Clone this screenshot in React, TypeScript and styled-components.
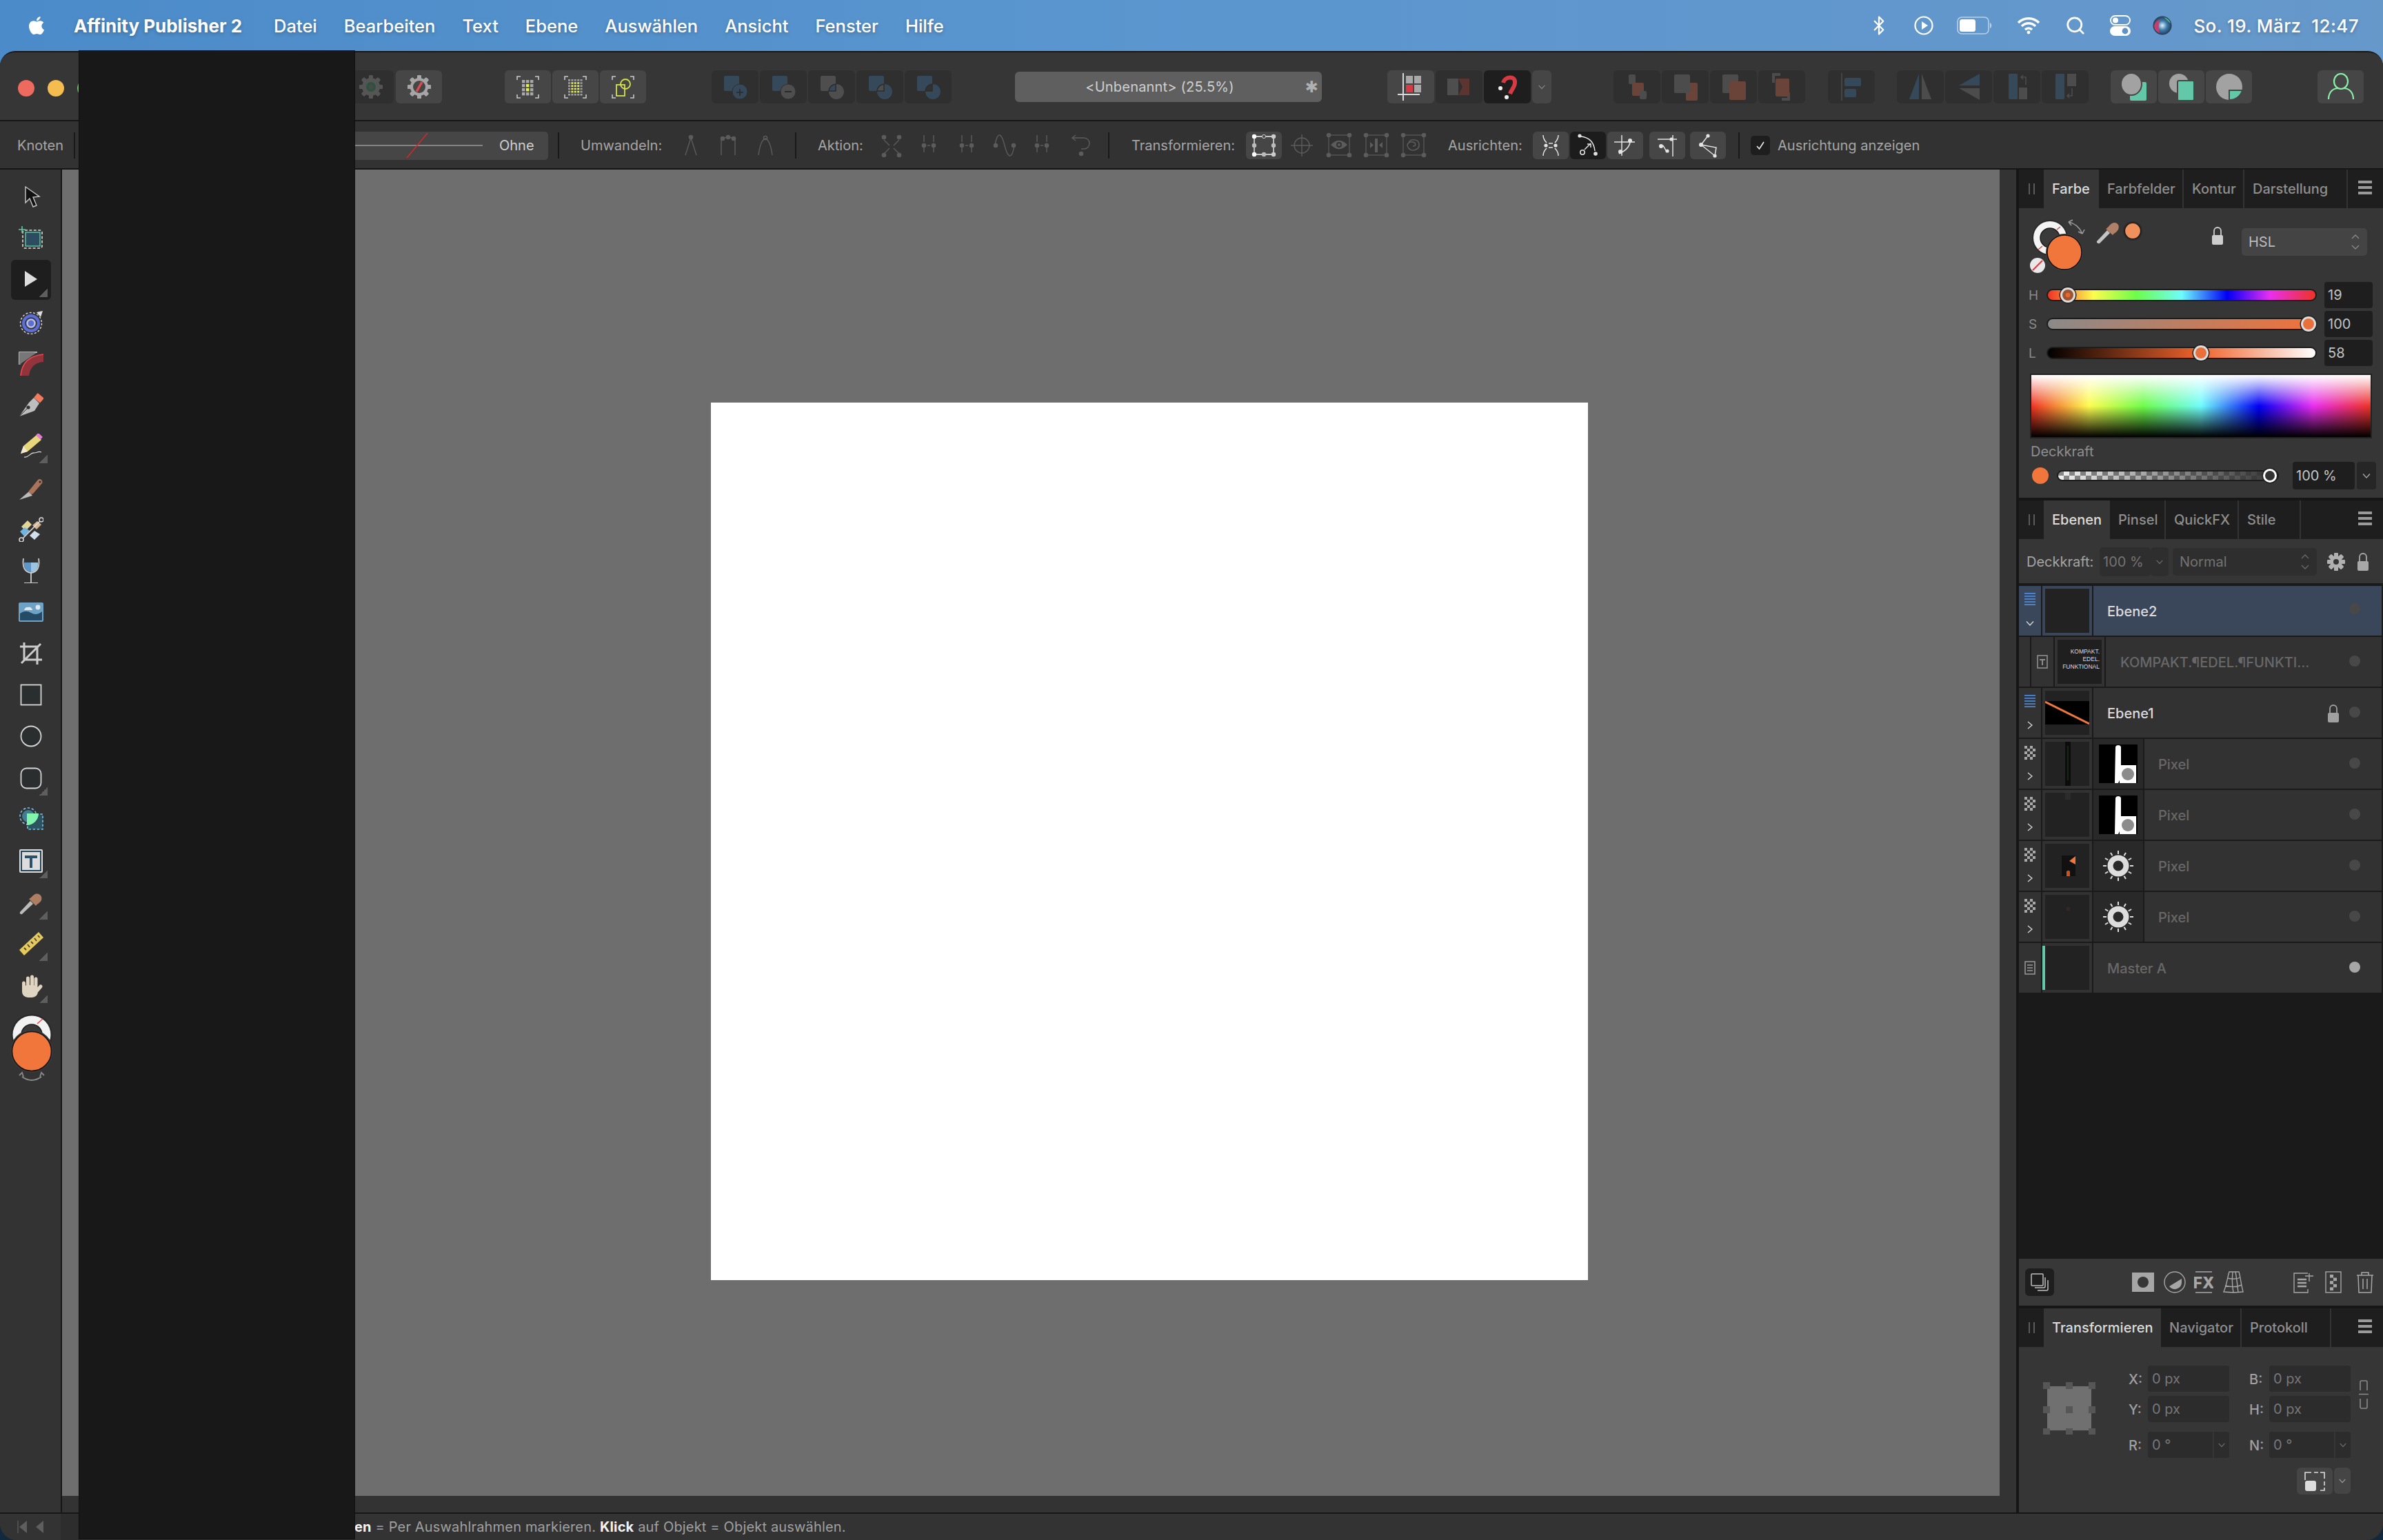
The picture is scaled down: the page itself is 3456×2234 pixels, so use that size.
import React from "react";
import styled, { createGlobalStyle } from "styled-components";
import { FaApple } from "react-icons/fa";
import { LuBluetooth, LuSearch } from "react-icons/lu";

const FONT = `Inter, "Noto Sans", "Liberation Sans", sans-serif`;
const TEAL = "#62c8a8";
const ORANGE = "#f0763c";
const DIM = "#5c5c5c";

const Global = createGlobalStyle`
	html, body { margin: 0; padding: 0; background: #10293c; }
	* { box-sizing: border-box; }
	svg { display: block; flex: none; }
`;

const Desktop = styled.div`
	position: relative;
	width: 3456px;
	height: 2234px;
	display: flex;
	flex-direction: column;
	overflow: hidden;
	font-family: ${FONT};
	background: linear-gradient(90deg, #4b8bc9, #6699cb) top / 100% 120px no-repeat, #10293c;
`;

const MenuBar = styled.div`
	height: 74px;
	flex: none;
	display: flex;
	align-items: center;
	padding: 0 35px 0 38px;
	color: #fff;
	font-size: 25.5px;
	font-weight: 500;
	text-shadow: 0 2px 5px rgba(0, 0, 0, 0.25);
	background: linear-gradient(90deg, #4b8bc9, #5b96cf 50%, #6698ca);
`;

const AppName = styled.span`
	margin: 0 46px 0 39px;
	font-size: 26px;
	font-weight: 700;
`;

const MenuItem = styled.span`
	margin-right: 39px;
`;

const StatusIcons = styled.div`
	margin-left: auto;
	display: flex;
	align-items: center;
`;

const StatusSlot = styled.div<{ $w: number; $ml: number }>`
	width: ${(p) => p.$w}px;
	margin-left: ${(p) => p.$ml}px;
	display: flex;
	justify-content: center;
`;

const Clock = styled.span`
	margin-left: 31px;
	font-size: 26px;
	white-space: pre;
	letter-spacing: 0.42px;
`;

const Redaction = styled.div`
	position: absolute;
	left: 115px;
	top: 74px;
	width: 399px;
	height: 2158px;
	background: #181818;
	box-shadow: 0 0 0 1px #101010;
`;

const Window = styled.div`
	flex: 1;
	display: flex;
	flex-direction: column;
	min-height: 0;
	background: #333;
	border-top: 2px solid #161616;
	border-radius: 22px 22px 24px 24px;
	overflow: hidden;
`;

const Toolbar = styled.div`
	height: 100px;
	flex: none;
	display: flex;
	align-items: center;
	padding: 2px 0 0 26px;
	background: #363636;
	border-bottom: 2px solid #161616;
`;

const ContextBar = styled.div`
	height: 70px;
	flex: none;
	display: flex;
	align-items: center;
	padding: 2px 0 0 25px;
	background: #323232;
	border-bottom: 2px solid #161616;
	color: #a6a6a6;
	font-size: 20px;
`;

const Lights = styled.div`
	display: flex;
	gap: 19px;
	margin-top: 4px;
`;

const Light = styled.span<{ $c: string }>`
	width: 24px;
	height: 24px;
	border-radius: 50%;
	background: ${(p) => p.$c};
`;

const Group = styled.div<{ $ml: number; $gap?: number }>`
	margin-left: ${(p) => p.$ml}px;
	display: flex;
	gap: ${(p) => p.$gap ?? 2}px;
`;

const ToolBtn = styled.div<{ $w?: number; $tone?: "dim" | "on" | "sel" }>`
	width: ${(p) => p.$w ?? 68}px;
	height: 48px;
	display: flex;
	align-items: center;
	justify-content: center;
	color: #bbb;
	font-size: 16px;
	border-radius: 6px;
	background: ${(p) => (p.$tone === "sel" ? "#1e1e1e" : p.$tone === "on" ? "#464646" : "#2f2f2f")};
`;

const TitleField = styled.div`
	position: relative;
	margin-left: 92px;
	width: 445px;
	height: 44px;
	padding-right: 25px;
	display: flex;
	align-items: center;
	justify-content: center;
	border-radius: 6px;
	background: #5f5f5f;
	color: #cfcfcf;
	font-size: 20px;
	letter-spacing: 0.2px;
`;

const TitleStar = styled.span`
	position: absolute;
	right: 5px;
	top: 8px;
	font: 23px / 28px "DejaVu Sans", sans-serif;
	color: #b0b0b0;
`;

const Sep = styled.span<{ $ml: number }>`
	width: 2px;
	height: 38px;
	flex: none;
	margin-left: ${(p) => p.$ml}px;
	background: #191919;
`;

const BarLabel = styled.span<{ $ml?: number; $w?: number }>`
	margin-left: ${(p) => p.$ml ?? 0}px;
	${(p) => (p.$w ? `width: ${p.$w}px;` : "")}
	flex: none;
	white-space: nowrap;
`;

const LineField = styled.div`
	margin-left: 405px;
	width: 281px;
	height: 41px;
	display: flex;
	align-items: center;
	border-radius: 0 5px 5px 0;
	background: #464646;
	color: #d0d0d0;
`;

const LineText = styled.span`
	margin-left: 24px;
`;

const IconSlot = styled.div<{ $w?: number; $ml?: number }>`
	width: ${(p) => p.$w ?? 54}px;
	margin-left: ${(p) => p.$ml ?? 0}px;
	flex: none;
	display: flex;
	justify-content: center;
`;

const SmallBtn = styled.div<{ $ml?: number; $tone?: "on" | "sel" }>`
	width: 52px;
	height: 40px;
	flex: none;
	margin-left: ${(p) => p.$ml ?? 0}px;
	display: flex;
	align-items: center;
	justify-content: center;
	border-radius: 6px;
	background: ${(p) => (p.$tone === "sel" ? "#1c1c1c" : "#464646")};
`;

const Check = styled.div`
	width: 28px;
	height: 28px;
	flex: none;
	margin-left: 16px;
	display: flex;
	align-items: center;
	justify-content: center;
	border-radius: 5px;
	background: #1e1e1e;
`;

const Main = styled.div`
	flex: 1;
	min-height: 0;
	display: flex;
`;

const ToolColumn = styled.div`
	width: 90px;
	flex: none;
	padding: 11px 0 0 16px;
	display: flex;
	flex-direction: column;
	gap: 2.2px;
	border-right: 2px solid #161616;
	background: #333;
`;

const Tool = styled.div<{ $sel?: boolean }>`
	position: relative;
	width: 58px;
	height: 58px;
	display: flex;
	align-items: center;
	justify-content: center;
	border-radius: 6px;
	background: ${(p) => (p.$sel ? "#1e1e1e" : "transparent")};
`;

const Corner = styled.span`
	position: absolute;
	right: 5px;
	bottom: 4px;
	width: 12px;
	height: 12px;
	background: linear-gradient(135deg, transparent 50%, #5e5e5e 50%);
`;

const ColourWell = styled.div`
	margin: 8px 0 0 -2px;
`;

const CanvasColumn = styled.div`
	flex: 1;
	min-width: 0;
	display: flex;
	flex-direction: column;
`;

const CanvasRow = styled.div`
	flex: 1;
	min-height: 0;
	padding-right: 24px;
	display: flex;
`;

const Canvas = styled.div`
	flex: 1;
	background: #6e6e6e;
	padding: 338px 0 0 941px;
`;

const Page = styled.div`
	width: 1272px;
	height: 1273px;
	background: #fff;
`;

const HScrollStrip = styled.div`
	height: 24px;
	flex: none;
`;

const RightColumn = styled.div`
	width: 532px;
	flex: none;
	display: flex;
	flex-direction: column;
	gap: 4px;
	border-left: 4px solid #161616;
	background: #161616;
`;

const Panel = styled.section<{ $grow?: boolean; $h?: number }>`
	${(p) => (p.$grow ? "flex: 1; min-height: 0;" : `height: ${p.$h}px; flex: none;`)}
	display: flex;
	flex-direction: column;
	background: #363636;
`;

const TabBar = styled.div`
	height: 56px;
	flex: none;
	display: flex;
	align-items: stretch;
	background: #1e1e1e;
	font-size: 20px;
	font-weight: 500;
`;

const Grip = styled.div`
	width: 36px;
	display: flex;
	align-items: center;
	justify-content: center;
	gap: 5px;
	& > i {
		width: 2px;
		height: 16px;
		background: #5a5a5a;
	}
`;

const Tab = styled.div<{ $w: number; $active?: boolean }>`
	width: ${(p) => p.$w}px;
	padding-left: 12px;
	display: flex;
	align-items: center;
	white-space: nowrap;
	color: ${(p) => (p.$active ? "#dcdcdc" : "#8e8e8e")};
	background: ${(p) => (p.$active ? "#363636" : "transparent")};
	${(p) => (p.$active ? "" : "border-right: 2px solid #333;")}
	&:last-of-type {
		border-right: none;
	}
`;

const Burger = styled.div`
	margin: 16px 16px 0 auto;
	width: 20px;
	height: 20px;
	background: repeating-linear-gradient(#9a9a9a 0 4px, transparent 4px 8px);
`;

const ColourBody = styled.div`
	flex: 1;
	padding-top: 16px;
	color: #9a9a9a;
	font-size: 20px;
`;

const SwatchRow = styled.div`
	height: 91px;
	display: flex;
	padding-left: 12px;
`;

const LockWrap = styled.div`
	margin: 11px 0 0 97px;
`;

const Select = styled.div<{ $w: number; $ml: number; $h?: number; $tone?: string }>`
	width: ${(p) => p.$w}px;
	height: ${(p) => p.$h ?? 40}px;
	margin-left: ${(p) => p.$ml}px;
	padding: 0 10px;
	display: flex;
	align-items: center;
	justify-content: space-between;
	border-radius: 5px;
	background: ${(p) => p.$tone ?? "#444"};
`;

const HslSelect = styled(Select)`
	margin-top: 13px;
	color: #bcbcbc;
`;

const SliderStack = styled.div`
	display: flex;
	flex-direction: column;
	gap: 4px;
`;

const SliderRow = styled.div`
	height: 38px;
	padding-left: 14px;
	display: flex;
	align-items: center;
`;

const SliderLabel = styled.span`
	width: 26px;
	font-size: 19px;
	color: #8a8a8a;
`;

const Track = styled.div<{ $bg: string; $w: number; $h?: number }>`
	position: relative;
	width: ${(p) => p.$w}px;
	height: ${(p) => p.$h ?? 18}px;
	border: 2px solid #1d1d1d;
	border-radius: 10px;
	background: ${(p) => p.$bg};
`;

const Thumb = styled.span<{ $pos: number; $fill: string }>`
	position: absolute;
	left: ${(p) => p.$pos}%;
	top: 50%;
	width: 22px;
	height: 22px;
	transform: translate(-50%, -50%);
	border-radius: 50%;
	border: 3px solid #ddd;
	box-shadow: 0 0 0 1.5px #222;
	background: ${(p) => p.$fill};
`;

const WhiteThumb = styled(Thumb)`
	width: 20px;
	height: 20px;
	border: 3.5px solid #fff;
`;

const ValueBox = styled.div<{ $w?: number; $ml?: number }>`
	width: ${(p) => p.$w ?? 70}px;
	height: ${(p) => (p.$w ? 40 : 38)}px;
	flex: none;
	margin-left: ${(p) => p.$ml ?? 11}px;
	padding-left: 5px;
	display: flex;
	align-items: center;
	border-radius: 4px;
	background: #1e1e1e;
	color: #c4c4c4;
`;

const ChevBox = styled.div`
	width: 28px;
	height: 40px;
	margin-left: 3px;
	display: flex;
	align-items: center;
	justify-content: center;
	border-radius: 4px;
	background: #262626;
`;

const Spectrum = styled.div`
	width: 496px;
	height: 94px;
	margin: 11px 0 0 16px;
	border: 2px solid #222;
	background: linear-gradient(#fff, transparent 50%, #000),
		linear-gradient(90deg, #ee3324, #fdfc4f 17%, #6efc4a 33%, #6efcfc 50%, #0000f5 67%, #e92ef0 83%, #ee3324);
`;

const OpacityCaption = styled.div`
	margin: 7px 0 0 17px;
	line-height: 24px;
	color: #8e8e8e;
`;

const OpacityRow = styled.div`
	margin-top: 3px;
	padding-left: 19px;
	display: flex;
	align-items: center;
`;

const OrangeDot = styled.span`
	width: 24px;
	height: 24px;
	flex: none;
	margin-right: 12px;
	border-radius: 50%;
	background: ${ORANGE};
`;

const LayerOptions = styled.div`
	height: 64px;
	flex: none;
	padding: 2px 0 0 11px;
	display: flex;
	align-items: center;
	color: #a4a4a4;
	font-size: 20px;
`;

const DarkSegment = styled.div<{ $w: number; $ml?: number }>`
	width: ${(p) => p.$w}px;
	height: 42px;
	flex: none;
	margin-left: ${(p) => p.$ml ?? 0}px;
	padding-left: 5px;
	display: flex;
	align-items: center;
	background: #2e2e2e;
	color: #737373;
	border-radius: 5px;
`;

const ChevSegment = styled(DarkSegment)`
	padding: 0;
	justify-content: center;
`;

const NormalLabel = styled.span`
	color: #737373;
`;

const LayerList = styled.div`
	flex: 1;
	min-height: 0;
	padding: 4px 2px 0 0;
	display: flex;
	flex-direction: column;
	gap: 2px;
	background: #1a1a1a;
`;

const Row = styled.div`
	height: 72px;
	flex: none;
	display: flex;
	gap: 2px;
`;

const Cell = styled.div<{ $sel?: boolean; $w: number; $dark?: boolean }>`
	width: ${(p) => p.$w}px;
	flex: none;
	display: flex;
	align-items: center;
	justify-content: center;
	background: ${(p) => (p.$sel ? "#3a475a" : p.$dark ? "#292929" : "#323232")};
`;

const SideCell = styled(Cell)<{ $center?: boolean }>`
	flex-direction: column;
	justify-content: ${(p) => (p.$center ? "center" : "space-between")};
	padding: ${(p) => (p.$center ? "0" : "10px 0 11px")};
`;

const ThumbBox = styled.div<{ $accent?: boolean }>`
	position: relative;
	width: 64px;
	height: 64px;
	overflow: hidden;
	background: #222;
	${(p) => (p.$accent ? `border-left: 4px solid ${TEAL}; margin-left: -4px; width: 68px;` : "")}
`;

const TextThumb = styled.div`
	width: 64px;
	height: 64px;
	padding: 12px 3px 0 0;
	text-align: right;
	background: #1f1f1f;
	color: #ddd;
	font: 8.5px / 11px "Liberation Sans", sans-serif;
`;

const NameCell = styled.div<{ $sel?: boolean; $pad: number; $dim?: boolean }>`
	flex: 1;
	min-width: 0;
	padding: 2px 31px 0 ${(p) => p.$pad}px;
	display: flex;
	align-items: center;
	gap: 14px;
	font-size: 20px;
	font-weight: 500;
	color: ${(p) => (p.$dim ? "#686868" : "#dcdcdc")};
	background: ${(p) => (p.$sel ? "#3a475a" : "#323232")};
`;

const NameText = styled.span`
	margin-right: auto;
	white-space: nowrap;
`;

const VisDot = styled.span<{ $on?: boolean; $sel?: boolean }>`
	width: 16px;
	height: 16px;
	margin-bottom: ${(p) => (p.$sel ? 8 : 4)}px;
	border-radius: 50%;
	background: ${(p) => (p.$on ? "#a6a6a6" : "#484848")};
`;

const LayerTools = styled.div`
	height: 68px;
	flex: none;
	padding-left: 9px;
	display: flex;
	align-items: center;
	background: #383838;
`;

const StackBtn = styled.div`
	width: 42px;
	height: 40px;
	display: flex;
	align-items: center;
	justify-content: center;
	border-radius: 6px;
	background: #1e1e1e;
`;

const XformBody = styled.div`
	flex: 1;
	padding: 27px 0 0 35px;
	display: flex;
	flex-wrap: wrap;
	align-content: flex-start;
	color: #a0a0a0;
	font-size: 20px;
`;

const Anchor = styled.div`
	width: 76px;
	margin: 24px 48px 0 0;
`;

const XformGrid = styled.div`
	display: grid;
	grid-template-columns: 28px 118px 58px 118px;
	grid-template-rows: 38px 44px 52px;
	align-items: end;
`;

const XformLabel = styled.span<{ $second?: boolean }>`
	height: 38px;
	padding-left: ${(p) => (p.$second ? 29 : 0)}px;
	line-height: 40px;
	font-weight: 500;
`;

const XformField = styled.div`
	height: 38px;
	padding-left: 6px;
	display: flex;
	align-items: center;
	justify-content: space-between;
	border-radius: 4px;
	background: #2c2c2c;
	color: #777;
`;

const ChevTail = styled.span`
	width: 24px;
	height: 38px;
	display: flex;
	align-items: center;
	justify-content: center;
	border-left: 2px solid #363636;
`;

const ChainWrap = styled.div`
	margin: 21px 0 0 12px;
`;

const FitRow = styled.div`
	width: 100%;
	margin: 14px 0 0 368px;
	display: flex;
	gap: 2px;
`;

const FitBtn = styled.div`
	width: 52px;
	height: 39px;
	display: flex;
	align-items: center;
	justify-content: center;
	border-radius: 6px;
	background: #454545;
`;

const FitChev = styled(FitBtn)`
	width: 24px;
	height: 38px;
`;

const BottomStrip = styled.div`
	height: 40px;
	flex: none;
	display: flex;
	align-items: center;
	background: #333;
	border-top: 2px solid #161616;
	color: #a0a0a0;
	font-size: 20px;
`;

const PageNav = styled.div`
	width: 88px;
	padding-left: 24px;
	display: flex;
	align-items: center;
`;

const PageNumber = styled.div`
	width: 27px;
	height: 100%;
	background: #2d2d2d;
`;

const StatusText = styled.div`
	margin-left: 399px;
	white-space: nowrap;
	letter-spacing: 0.17px;
	& > b {
		color: #f2f2f2;
		font-weight: 700;
	}
`;

/* ---------- small drawing helpers ---------- */

const Chev = ({ c = "#8a8a8a", s = 14, d = "down" }: { c?: string; s?: number; d?: string }) => (
	<svg width={s} height={s} viewBox="0 0 14 14" fill="none" stroke={c} strokeWidth="1.3">
		{d === "down" ? <path d="M2 4.5 7 10l5-5.5" /> : <path d="M4 2l6 5-6 5" />}
	</svg>
);

const UpDown = ({ c = "#8a8a8a" }: { c?: string }) => (
	<svg width="14" height="30" viewBox="0 0 14 30" fill="none" stroke={c} strokeWidth="1.3">
		<path d="M2 10l5-5 5 5M2 20l5 5 5-5" />
	</svg>
);

const Padlock = ({ c = "#cdcdcd" }: { c?: string }) => (
	<svg width="18" height="26" viewBox="0 0 18 26">
		<path d="M4 12V6a5 5 0 0 1 10 0v6" fill="none" stroke={c} strokeWidth="1.8" />
		<rect x="1" y="12" width="16" height="14" rx="2" fill={c} />
	</svg>
);

const Gear = ({ cx, cy, r, fill }: { cx: number; cy: number; r: number; fill: string }) => (
	<g>
		{[0, 45, 90, 135, 180, 225, 270, 315].map((a) => (
			<rect key={a} x={cx - 3} y={cy - r - 4} width="6" height={2 * r + 8} rx="1.5" fill={fill} transform={`rotate(${a} ${cx} ${cy})`} />
		))}
		<circle cx={cx} cy={cy} r={r} fill={fill} />
	</g>
);

const Brackets = ({ c = "#c8c8c8" }: { c?: string }) => (
	<path d="M3 8V3h5M29 3h5v5M3 29v5h5M29 34h5v-5" fill="none" stroke={c} strokeWidth="1.6" />
);

const SelectIcon = ({ kind }: { kind: number }) => (
	<svg width="37" height="37" viewBox="0 0 37 37">
		<Brackets />
		{kind === 0 &&
			[0, 1, 2, 3].flatMap((r) =>
				[0, 1, 2].map((c) => (
					<rect key={`${r}${c}`} x={10 + c * 6} y={8 + r * 6} width="4.4" height="4.4" fill={(r === 1 || r === 2) && c === 1 ? "#e6f04a" : "#a9a9a9"} />
				))
			)}
		{kind === 1 &&
			[0, 1, 2, 3, 4, 5].flatMap((r) =>
				[0, 1, 2, 3, 4].map((c) => (
					<rect key={`${r}${c}`} x={8 + c * 4.4} y={7 + r * 4.2} width="3" height="2.6" fill={r > 0 && r < 5 && c > 0 && c < 4 ? "#e6f04a" : "#9d9d9d"} />
				))
			)}
		{kind === 2 && (
			<g fill="none" strokeWidth="1.8" stroke="#d6e24a">
				<circle cx="22" cy="14" r="7" />
				<rect x="9" y="15" width="12" height="16" />
			</g>
		)}
	</svg>
);

const BoolIcon = ({ kind }: { kind: number }) => {
	const blue = "#35495a";
	const grey = "#4e4e4e";
	const sq = kind === 2 ? grey : blue;
	const ci = kind === 1 || kind === 2 ? grey : blue;
	const mid = kind === 2 ? blue : kind === 3 ? grey : kind === 4 ? "#313131" : null;
	return (
		<svg width="68" height="48" viewBox="0 0 68 48">
			<rect x="18" y="8" width="22" height="22" rx="2" fill={sq} />
			<circle cx="41" cy="31" r="11" fill={ci} stroke={kind < 2 ? "#2f2f2f" : "none"} />
			{mid && <path d="M40 20A11 11 0 0 0 30 30h10Z" fill={mid} stroke="#2d2d2d" strokeWidth="1.6" />}
			{kind === 0 && <path d="M36 32h10M41 27v10" stroke="#2a2a2a" strokeWidth="1.6" />}
			{kind === 1 && <path d="M36 31h10" stroke="#2a2a2a" strokeWidth="2" />}
		</svg>
	);
};

const ArrangeIcon = ({ kind }: { kind: number }) => {
	const red = "#6a4339";
	const grey = "#4c4c4c";
	return (
		<svg width="40" height="40" viewBox="0 0 40 40">
			{kind === 0 && (
				<>
					<rect x="8" y="2" width="10" height="14" rx="2" fill={grey} />
					<rect x="13" y="14" width="17" height="19" rx="2" fill={red} />
					<rect x="24" y="26" width="10" height="12" rx="2" fill={grey} />
				</>
			)}
			{kind === 1 && (
				<>
					<rect x="21" y="14" width="17" height="26" rx="2" fill={red} />
					<rect x="4" y="2" width="23" height="27" rx="2" fill={grey} />
				</>
			)}
			{kind === 2 && (
				<>
					<rect x="4" y="2" width="23" height="27" rx="2" fill={grey} />
					<rect x="14" y="12" width="24" height="27" rx="2" fill={red} />
				</>
			)}
			{kind === 3 && (
				<>
					<path d="M8 14V2h10M30 28v10H20" fill="none" stroke={grey} strokeWidth="4" />
					<rect x="11" y="8" width="20" height="26" rx="2" fill={red} />
				</>
			)}
		</svg>
	);
};

const FlipIcon = ({ kind }: { kind: number }) => {
	const blue = "#35495a";
	const grey = "#4c4c4c";
	return (
		<svg width="40" height="40" viewBox="0 0 40 40">
			{kind === 0 && (
				<>
					<path d="M18 1v37H4Z" fill={blue} />
					<path d="M22 1v37h14Z" fill={grey} />
				</>
			)}
			{kind === 1 && (
				<>
					<path d="M36 1v17H6Z" fill={blue} />
					<path d="M36 39V22H6Z" fill={grey} />
				</>
			)}
			{kind === 2 && (
				<>
					<rect x="8" y="1" width="13" height="37" rx="1" fill={blue} />
					<rect x="23" y="21" width="12" height="17" fill={grey} />
					<path d="M33 17V6h-7m3-3-3 3 3 3" fill="none" stroke={grey} strokeWidth="1.6" />
				</>
			)}
			{kind === 3 && (
				<>
					<rect x="6" y="1" width="13" height="37" rx="1" fill={blue} />
					<rect x="23" y="1" width="13" height="18" fill={grey} />
					<path d="M30 22v11h-7m3-3-3 3 3 3" fill="none" stroke={grey} strokeWidth="1.6" />
				</>
			)}
		</svg>
	);
};

const GeoIcon = ({ kind }: { kind: number }) => (
	<svg width="40" height="42" viewBox="0 0 40 42">
		{kind === 0 && (
			<>
				<rect x="14" y="14" width="24" height="27" rx="2" fill={TEAL} />
				<ellipse cx="16" cy="17" rx="15" ry="16" fill="#a2a2a2" stroke="#464646" strokeWidth="2" />
			</>
		)}
		{kind === 1 && (
			<>
				<circle cx="16" cy="16" r="14" fill="#a2a2a2" />
				<rect x="14" y="12" width="24" height="29" rx="2" fill={TEAL} stroke="#464646" strokeWidth="2" />
			</>
		)}
		{kind === 2 && (
			<>
				<circle cx="20" cy="21" r="19" fill="#a2a2a2" />
				<path d="M20 26h19A19 19 0 0 1 20 40Z" fill={TEAL} stroke="#464646" strokeWidth="2" />
			</>
		)}
	</svg>
);

const CtxIcon = ({ name, c = DIM }: { name: string; c?: string }) => {
	const node = (x: number, y: number, fill = c) => <circle cx={x} cy={y} r="2.6" fill={fill} />;
	const frame = (
		<>
			<rect x="5" y="3" width="30" height="29" fill="none" stroke={c} strokeWidth="1.2" />
			{node(5, 3)}
			{node(35, 3)}
			{node(5, 32)}
			{node(35, 32)}
		</>
	);
	return (
		<svg width="40" height="36" viewBox="0 0 40 36" fill="none" stroke={c} strokeWidth="1.4">
			{name === "sharp" && (
				<>
					<path d="M20 7 12 32M20 7l8 25" />
					{node(20, 6)}
				</>
			)}
			{name === "smooth" && (
				<>
					<path d="M10 32V10Q20 2 30 10v22" />
					{node(20, 6)}
					{node(12, 8)}
					{node(28, 8)}
				</>
			)}
			{name === "auto" && (
				<>
					<path d="M10 32Q13 10 20 8Q27 10 30 32" />
					<circle cx="20" cy="7" r="2.6" />
				</>
			)}
			{name === "break" && (
				<>
					<path d="M9 10l8 8M31 10l-8 8M9 30l8-8M31 30l-8-8" />
					{node(9, 6)}
					{node(31, 6)}
					{node(9, 32)}
					{node(31, 32)}
				</>
			)}
			{name === "join" && (
				<>
					<path d="M13 3v30M27 3v30" strokeDasharray="10 5" />
					{node(13, 18)}
					{node(27, 18)}
					<path d="M18 18h4" />
				</>
			)}
			{name === "curve" && (
				<>
					<path d="M6 18c4-24 10-16 14 0s10 24 14 0" />
					{node(7, 18)}
					{node(33, 18)}
				</>
			)}
			{name === "undo" && (
				<>
					<path d="M10 7h16a8 8 0 0 1 0 16h-4M14 3l-5 4 5 4" />
					{node(22, 30)}
				</>
			)}
			{name === "target" && (
				<>
					<circle cx="20" cy="18" r="11" />
					<path d="M20 2v32M4 18h32" />
				</>
			)}
			{name === "eye" && (
				<>
					{frame}
					<path d="M9 17q11-11 22 0q-11 11-22 0Z" fill={c} />
					<circle cx="20" cy="17" r="4" fill="#323232" stroke="none" />
					<circle cx="20" cy="17" r="2" fill={c} stroke="none" />
				</>
			)}
			{name === "mirror" && (
				<>
					{frame}
					<path d="M20 8v20" strokeWidth="4" />
					<path d="M11 13v9l5-4.5ZM29 13v9l-5-4.5Z" fill={c} stroke="none" />
				</>
			)}
			{name === "spiral" && (
				<>
					{frame}
					<path d="M13 14c2-6 14-6 15 2s-10 12-15 6 1-10 6-9 5 6 0 6" strokeWidth="1.6" />
				</>
			)}
		</svg>
	);
};

const NodeFrame = () => (
	<svg width="36" height="34" viewBox="0 0 36 34">
		<path d="M4 4h28v26H4Z" fill="none" stroke="#eee" strokeWidth="1.4" />
		{[[4, 4, "#fff"], [32, 4, "#ccc"], [4, 17, "#bbb"], [32, 17, "#bbb"], [4, 30, "#fff"], [18, 30, "#bbb"], [32, 30, "#ccc"]].map(([x, y, f]) => (
			<circle key={`${x}-${y}`} cx={x as number} cy={y as number} r="3.2" fill={f as string} />
		))}
		<circle cx="18" cy="4" r="2.6" fill="#464646" stroke="#ccc" strokeWidth="1" />
	</svg>
);

const SnapIcon = ({ name }: { name: string }) => {
	const w = "#e4e4e4";
	return (
		<svg width="36" height="36" viewBox="0 0 36 36" fill="none" stroke={w} strokeWidth="1.5">
			{name === "a" && (
				<>
					<path d="M7 3Q7 9 12 14M29 3q0 6-5 11M7 33q0-6 5-11M29 33q0-6-5-11M15 15h6M15 21h6" />
					<circle cx="11" cy="18" r="2.6" fill={w} stroke="none" />
					<circle cx="25" cy="18" r="2.6" fill={w} stroke="none" />
				</>
			)}
			{name === "b" && (
				<>
					<path d="M8 5q18 2 20 21M13 24l9-9m-5 1h5v5" />
					<circle cx="6" cy="4" r="2.6" fill={w} stroke="none" />
					<circle cx="29" cy="30" r="2.8" fill={w} stroke="none" />
					<circle cx="10" cy="28" r="3.2" />
				</>
			)}
			{name === "c" && (
				<>
					<path d="M13 3v30M2 13h30M25 8q2 14-16 22" />
					<circle cx="25" cy="11" r="3" fill={w} stroke="none" />
					<circle cx="11" cy="27" r="3" fill={w} stroke="none" />
				</>
			)}
			{name === "d" && (
				<>
					<path d="M4 9h28M26 3v31M12 18l5 9" />
					<circle cx="24" cy="9" r="2.6" fill={w} stroke="none" />
					<circle cx="9" cy="19" r="3" fill={w} stroke="none" />
					<circle cx="18" cy="26" r="2.6" fill={w} stroke="none" />
				</>
			)}
			{name === "e" && (
				<>
					<path d="M18 4 8 17l22 4-2 12" />
					<path d="M8 17l20 16" />
					<circle cx="18" cy="4" r="2.6" fill={w} stroke="none" />
					<circle cx="8" cy="17" r="3" fill={w} stroke="none" />
					<circle cx="28" cy="33" r="2.6" fill={w} stroke="none" />
				</>
			)}
		</svg>
	);
};

/* ---------- tool column ---------- */

const toolIcons: Record<string, React.ReactNode> = {
	arrow: <path d="M10 3v23l6-6 5 12 5-2-5-12 9-1Z" fill="#111" stroke="#c8c8c8" strokeWidth="1.4" />,
	artboard: (
		<>
			<rect x="6" y="6" width="28" height="26" rx="3" fill="none" stroke="#ddd" strokeWidth="1.6" strokeDasharray="4 2.4" />
			<rect x="10" y="9" width="21" height="20" fill="#2c4c60" stroke={TEAL} strokeWidth="1.4" />
			<path d="M5 0v10M0 5h10" stroke={TEAL} strokeWidth="1.6" />
		</>
	),
	node: <path d="M9 5v23l18-11Z" fill="#ddd" />,
	contour: (
		<>
			<circle cx="18" cy="20" r="15.5" fill="none" stroke="#ddd" strokeWidth="1.4" strokeDasharray="3 2.4" />
			<circle cx="18" cy="20" r="13" fill="#5d6fd6" />
			<circle cx="18" cy="20" r="5.5" fill="none" stroke="#ccc" strokeWidth="2" />
			<circle cx="18" cy="20" r="8" fill="none" stroke="#333" strokeWidth="1.5" />
			<path d="M26 4l9-2-3 9Z" fill="#ddd" />
		</>
	),
	corner: (
		<>
			<path d="M1 20V2h26" fill="#777" stroke="#ddd" strokeWidth="1.6" />
			<path d="M1 20V2h26Q6 4 3 20Z" fill="#777" />
			<path d="M3 36Q5 8 36 5v11Q18 17 15 36Z" fill="#93333b" />
			<path d="M3 36Q5 8 36 5" fill="none" stroke="#ee4a52" strokeWidth="1.6" />
		</>
	),
	pen: (
		<>
			<path d="M22 8l8 8-7 11-22 8 14-20Z" fill="#bdbdbd" />
			<path d="M1 35l13-13" stroke="#333" strokeWidth="1" />
			<circle cx="14" cy="22" r="2.6" fill="#333" />
			<rect x="23.5" y="3.5" width="12" height="9" rx="1" fill="#f5795c" transform="rotate(40 29 8)" />
		</>
	),
	pencil: (
		<>
			<path d="M3 29l4-11L26 2l7 7L13 26Z" fill="#e8d67a" />
			<path d="M3 29l4-11 6 8Z" fill="#f2ead0" />
			<rect x="26" y="1" width="9" height="5" rx="1" fill="#e57ad8" transform="rotate(42 30 3)" />
			<path d="M8 34c6 2 9-7 15-6 3 0 6-3 10-1" fill="none" stroke="#ddd" strokeWidth="1.2" />
		</>
	),
	brush: (
		<>
			<path d="M1 36l14-12 5 6Z" fill="#bbb" />
			<path d="M15 23 28 7c3-3 8 1 6 5L21 27c-2 2-8-1-6-4Z" fill="#a9745a" />
			<circle cx="31" cy="10" r="1.6" fill="#333" />
		</>
	),
	fill: (
		<>
			<path d="M4 14l9-9 6 6-9 9Z" fill="#e3d59a" />
			<path d="M20 12 27 6l6 5-7 7Z" fill="#d8b58d" />
			<path d="M2 21l7-6 7 5-8 8Z" fill="#70b4e0" />
			<path d="M16 27l7-7 8 5-8 8Z" fill="#cfe0ec" />
			<path d="M6 31 32 5" stroke="#ddd" strokeWidth="1.6" />
			<circle cx="4" cy="33" r="3" fill="#333" stroke="#ddd" strokeWidth="1.5" />
			<circle cx="33" cy="4" r="3" fill="#333" stroke="#ddd" strokeWidth="1.5" />
		</>
	),
	glass: (
		<>
			<path d="M7 0q-3 19 11 21q14-2 11-21" fill="none" stroke="#ccc" strokeWidth="1.8" />
			<path d="M8 6h10v14q-11-1-10-14Z" fill="#5d95c4" />
			<path d="M18 6h10q1 13-10 14Z" fill="#9cc4df" />
			<path d="M18 21v14M8 36h20" stroke="#ccc" strokeWidth="1.8" />
		</>
	),
	picture: (
		<>
			<rect x="0" y="4" width="36" height="28" rx="2" fill="#6ea3c6" />
			<path d="M2 20q8-6 16-1t16-2v13H2Z" fill="#254a66" />
			<path d="M8 15q2-5 6-4q3-2 6 3v1Z" fill="#dfe9f1" />
			<circle cx="28" cy="11" r="3.4" fill="#dfe9f1" />
		</>
	),
	crop: <path d="M8 2v25h26M2 8h25v26M4 32 32 4" fill="none" stroke="#ccc" strokeWidth="3" />,
	rect: <rect x="3.500" y="3.500" width="29" height="29" fill="#2a2e2e" stroke="#d6d6d6" strokeWidth="1.8" />,
	ellipse: <circle cx="18" cy="18" r="14.500" fill="#2a2e2e" stroke="#d6d6d6" strokeWidth="1.8" />,
	round: <rect x="3.500" y="3.500" width="29" height="29" rx="8" fill="#2a2e2e" stroke="#d6d6d6" strokeWidth="1.8" />,
	shape: (
		<>
			<circle cx="14" cy="13" r="12" fill="none" stroke="#7cc1e8" strokeWidth="1.6" strokeDasharray="3.5 2.6" />
			<circle cx="14" cy="13" r="9" fill="#3f7f90" />
			<rect x="13" y="10" width="22" height="22" fill="#2c5460" stroke="#7cc1e8" strokeWidth="1.6" strokeDasharray="3.5 2.6" />
			<path d="M12 9h17a17 17 0 0 1-17 17Z" fill="#82f5ad" />
		</>
	),
	text: (
		<>
			<rect x="1" y="1" width="34" height="34" rx="2" fill="#ddd" />
			<rect x="3" y="3" width="30" height="30" fill="#24465c" />
			<rect x="5" y="5" width="26" height="26" fill="#ddd" />
			<path d="M9 10h18v4H20v14h-4V14H9Z" fill="#2b5068" />
		</>
	),
	picker: (
		<>
			<path d="M2 32 17 16l4 4L5 35c-2 1-4-1-3-3Z" fill="#bbb" />
			<path d="M15 13c3-1 5-5 9-7 6-2 11 3 9 9-2 4-6 5-8 8Z" fill="#ae7d62" />
		</>
	),
	ruler: (
		<>
			<path d="M1 27 29 1l7 8L8 35Z" fill="#e6c95c" />
			<path d="M8 24l3 3M13 19l3 4M18 15l3 3M23 10l3 4M28 6l2.500 3" stroke="#444" strokeWidth="1.8" />
		</>
	),
	hand: (
		<>
			<path d="M7.500 14v10M13.500 7v14M19.500 5v16M25 8v14M25 27l7-8" fill="none" stroke="#dfd3c1" strokeWidth="5" strokeLinecap="round" />
			<rect x="5" y="17" width="23" height="18" rx="8.500" fill="#dfd3c1" />
		</>
	),
};

const tools: { key: string; corner?: boolean; sel?: boolean }[] = [
	{ key: "arrow" },
	{ key: "artboard" },
	{ key: "node", corner: true, sel: true },
	{ key: "contour" },
	{ key: "corner" },
	{ key: "pen" },
	{ key: "pencil", corner: true },
	{ key: "brush" },
	{ key: "fill" },
	{ key: "glass" },
	{ key: "picture" },
	{ key: "crop" },
	{ key: "rect" },
	{ key: "ellipse" },
	{ key: "round", corner: true },
	{ key: "shape" },
	{ key: "text", corner: true },
	{ key: "picker", corner: true },
	{ key: "ruler", corner: true },
	{ key: "hand", corner: true },
];

/* ---------- layer rows ---------- */

type LayerData = {
	name: string;
	kind: "layer" | "text" | "pixel" | "master";
	thumb?: string;
	mask?: "bar" | "sun";
	sel?: boolean;
	open?: boolean;
	locked?: boolean;
};

const layers: LayerData[] = [
	{ name: "Ebene2", kind: "layer", sel: true, open: true },
	{ name: "KOMPAKT.¶EDEL.¶FUNKTI...", kind: "text" },
	{ name: "Ebene1", kind: "layer", thumb: "line", locked: true },
	{ name: "Pixel", kind: "pixel", thumb: "bar", mask: "bar" },
	{ name: "Pixel", kind: "pixel", thumb: "faint", mask: "bar" },
	{ name: "Pixel", kind: "pixel", thumb: "tag", mask: "sun" },
	{ name: "Pixel", kind: "pixel", thumb: "spot", mask: "sun" },
	{ name: "Master A", kind: "master" },
];

const StackLines = () => (
	<svg width="16" height="18" viewBox="0 0 16 18">
		{[0, 4.1, 8.2, 12.3, 16.4].map((y) => (
			<rect key={y} x="0" y={y} width="16" height="1.6" fill="#4f8fe6" />
		))}
	</svg>
);

const Checker = () => (
	<svg width="16" height="20" viewBox="0 0 16 20">
		{[0, 1, 2, 3, 4].flatMap((r) =>
			[0, 1, 2, 3].map((c) => ((r + c) % 2 === 0 ? <rect key={`${r}${c}`} x={c * 4} y={r * 4} width="4" height="4" fill="#a8a8a8" /> : null))
		)}
	</svg>
);

const ThumbArt = ({ kind }: { kind?: string }) => {
	if (!kind) return null;
	return (
		<svg width="64" height="64" viewBox="0 0 64 64">
			{kind === "line" && (
				<>
					<rect x="0" y="15" width="64" height="34" fill="#000" />
					<path d="M0 16 64 48" stroke={ORANGE} strokeWidth="3" />
				</>
			)}
			{kind === "bar" && (
				<>
					<path d="M29 0c3-2 5-2 8 0v64h-8Z" fill="#0c0c0c" />
					<path d="M33 6v50" stroke="#254028" strokeWidth="1" />
				</>
			)}
			{kind === "faint" && <rect x="29" y="0" width="8" height="10" fill="#2c2c2c" />}
			{kind === "tag" && (
				<>
					<rect x="24" y="17" width="20" height="30" fill="#111" />
					<path d="M44 18v12l-9-5Z" fill={ORANGE} />
					<path d="M31 47v-6c0-3 5-3 5 0v6Z" fill="#c9541f" />
				</>
			)}
			{kind === "spot" && <rect x="31" y="18" width="5" height="5" fill="#352822" />}
		</svg>
	);
};

const MaskArt = ({ kind }: { kind: "bar" | "sun" }) =>
	kind === "bar" ? (
		<svg width="56" height="56" viewBox="0 0 56 56">
			<rect x="0" y="0" width="56" height="56" fill="#000" />
			<path d="M24 4c0-4 8-4 8 0v30h-2v18l-2 4h-5Z" fill="#fff" />
			<rect x="30" y="30" width="24" height="26" fill="#fff" />
			<circle cx="42" cy="43" r="9" fill="#8c8c8c" />
		</svg>
	) : (
		<svg width="44" height="44" viewBox="0 0 44 44">
			{Array.from({ length: 12 }, (_, i) => (
				<rect key={i} x="21" y="0" width="2" height="5" fill="#ddd" transform={`rotate(${i * 30} 22 22)`} />
			))}
			<circle cx="22" cy="22" r="11.5" fill="none" stroke="#ddd" strokeWidth="8" />
		</svg>
	);

const LayerRow = ({ layer }: { layer: LayerData }) => {
	const { kind, sel } = layer;
	if (kind === "text") {
		return (
			<Row>
				<Cell $w={16} />
				<Cell $w={32}>
					<svg width="16" height="20" viewBox="0 0 16 20">
						<rect x="1" y="1" width="14" height="18" fill="none" stroke="#8e8e8e" strokeWidth="1.6" />
						<path d="M4 6h8v2H9v7H7V8H4Z" fill="#8e8e8e" />
					</svg>
				</Cell>
				<Cell $w={72}>
					<TextThumb>
						KOMPAKT.
						<br />
						EDEL.
						<br />
						FUNKTIONAL
					</TextThumb>
				</Cell>
				<NameCell $pad={21} $dim>
					<NameText>{layer.name}</NameText>
					<VisDot />
				</NameCell>
			</Row>
		);
	}
	return (
		<Row>
			<SideCell $w={32} $sel={sel} $center={kind === "master"}>
				{kind === "layer" && <StackLines />}
				{kind === "pixel" && <Checker />}
				{kind === "master" && (
					<svg width="16" height="20" viewBox="0 0 16 20" fill="none" stroke="#9a9a9a" strokeWidth="1.5">
						<rect x="1" y="1" width="14" height="18" />
						<path d="M4 6h8M4 10h8M4 14h8" />
					</svg>
				)}
				{kind !== "master" && <Chev c="#d8d8d8" d={layer.open ? "down" : "right"} />}
			</SideCell>
			<Cell $w={72} $sel={sel}>
				<ThumbBox $accent={kind === "master"}>
					<ThumbArt kind={layer.thumb} />
				</ThumbBox>
			</Cell>
			{layer.mask && (
				<Cell $w={72} $dark>
					<MaskArt kind={layer.mask} />
				</Cell>
			)}
			<NameCell $sel={sel} $pad={20} $dim={kind !== "layer"}>
				<NameText>{layer.name}</NameText>
				{layer.locked && <Padlock c="#a0a0a0" />}
				<VisDot $on={kind === "master"} $sel={sel} />
			</NameCell>
		</Row>
	);
};

const Tabs = ({ items }: { items: [string, number][] }) => (
	<TabBar>
		<Grip>
			<i />
			<i />
		</Grip>
		{items.map(([label, w], i) => (
			<Tab key={label} $w={w} $active={i === 0}>
				{label}
			</Tab>
		))}
		<Burger />
	</TabBar>
);

export default function App() {
	return (
		<>
			<Global />
			<Desktop>
				<MenuBar>
					<FaApple size={30} />
					<AppName>Affinity Publisher 2</AppName>
					{["Datei", "Bearbeiten", "Text", "Ebene", "Auswählen", "Ansicht", "Fenster", "Hilfe"].map((m) => (
						<MenuItem key={m}>{m}</MenuItem>
					))}
					<StatusIcons>
						<StatusSlot $w={30} $ml={0}>
							<LuBluetooth size={30} strokeWidth={1.8} />
						</StatusSlot>
						<StatusSlot $w={28} $ml={36}>
							<svg width="28" height="28" viewBox="0 0 28 28">
								<circle cx="14" cy="14" r="12.5" fill="none" stroke="#fff" strokeWidth="2.2" />
								<path d="M11 8l9 6-9 6Z" fill="#fff" />
							</svg>
						</StatusSlot>
						<StatusSlot $w={52} $ml={34}>
							<svg width="52" height="26" viewBox="0 0 52 26">
								<rect x="1" y="1" width="45" height="24" rx="6" fill="none" stroke="#fff" strokeOpacity="0.55" strokeWidth="1.6" />
								<rect x="4" y="4" width="23" height="18" rx="3.5" fill="#fff" />
								<path d="M48 9c3 1 3 7 0 8Z" fill="#fff" fillOpacity="0.55" />
							</svg>
						</StatusSlot>
						<StatusSlot $w={34} $ml={35}>
							<svg width="34" height="26" viewBox="0 0 34 26" fill="none" stroke="#fff" strokeWidth="3.4">
								<path d="M2 9a21 21 0 0 1 30 0M7 14a14 14 0 0 1 20 0M12 19a7 7 0 0 1 10 0" />
								<circle cx="17" cy="23" r="2.4" fill="#fff" stroke="none" />
							</svg>
						</StatusSlot>
						<StatusSlot $w={30} $ml={36}>
							<LuSearch size={30} strokeWidth={2.2} />
						</StatusSlot>
						<StatusSlot $w={30} $ml={35}>
							<svg width="30" height="30" viewBox="0 0 30 30">
								<rect x="1" y="1" width="28" height="13" rx="6.5" fill="none" stroke="#fff" strokeWidth="1.8" />
								<circle cx="8" cy="7.5" r="4" fill="#fff" />
								<rect x="0" y="16" width="30" height="14" rx="7" fill="#fff" />
								<circle cx="22" cy="23" r="4.4" fill="#5f93c6" />
							</svg>
						</StatusSlot>
						<StatusSlot $w={28} $ml={32}>
							<svg width="28" height="28" viewBox="0 0 28 28">
								<defs>
									<radialGradient id="siri" cx="50%" cy="50%" r="55%">
										<stop offset="0" stopColor="#dff3ff" />
										<stop offset="0.45" stopColor="#3f7fae" />
										<stop offset="1" stopColor="#202a44" />
									</radialGradient>
								</defs>
								<circle cx="14" cy="14" r="13.5" fill="url(#siri)" />
								<path d="M2 14a12 12 0 0 0 8 11q-3-8 0-20Q4 8 2 14Z" fill="#c83c6c" />
								<path d="M16 2q8 2 10 9-5-5-10-9Z" fill="#52c48c" />
							</svg>
						</StatusSlot>
						<Clock>So. 19. März  12:47</Clock>
					</StatusIcons>
				</MenuBar>

				<Window>
					<Toolbar>
						<Lights>
							<Light $c="#ee6a5f" />
							<Light $c="#f5bd4f" />
							<Light $c="#61c554" />
						</Lights>
						<Group $ml={368} $gap={3}>
							<ToolBtn $w={67}>
								<svg width="36" height="40" viewBox="0 0 36 40">
									<Gear cx={18} cy={20} r={13} fill="#555" />
									<circle cx="18" cy="20" r="7" fill="#2f5240" />
									<circle cx="18" cy="20" r="3" fill="#4a4a4a" />
								</svg>
							</ToolBtn>
							<ToolBtn $w={67} $tone="on">
								<svg width="36" height="40" viewBox="0 0 36 40">
									<Gear cx={18} cy={20} r={13} fill="#a6a6a6" />
									<circle cx="18" cy="20" r="9" fill="#464646" />
									<path d="M14 27l8-14" stroke="#e04a50" strokeWidth="3.4" />
								</svg>
							</ToolBtn>
						</Group>
						<Group $ml={91}>
							{[0, 1, 2].map((k) => (
								<ToolBtn key={k} $w={67} $tone="on">
									<SelectIcon kind={k} />
								</ToolBtn>
							))}
						</Group>
						<Group $ml={95}>
							{[0, 1, 2, 3, 4].map((k) => (
								<ToolBtn key={k}>
									<BoolIcon kind={k} />
								</ToolBtn>
							))}
						</Group>
						<TitleField>
							{"<Unbenannt> (25.5%)"}
							<TitleStar>✱</TitleStar>
						</TitleField>
						<Group $ml={95}>
							<ToolBtn $tone="on">
								<svg width="40" height="40" viewBox="0 0 40 40">
									<path d="M9 0v40M1 31h32" stroke="#d8d8d8" strokeWidth="2" />
									<rect x="13" y="4" width="10" height="11" fill="#a8a8a8" />
									<rect x="25" y="4" width="10" height="11" fill="#a8a8a8" />
									<rect x="13" y="17" width="10" height="11" fill="#d83a44" />
									<rect x="25" y="17" width="10" height="11" fill="#a8a8a8" />
								</svg>
							</ToolBtn>
							<ToolBtn>
								<svg width="40" height="32" viewBox="0 0 40 32">
									<rect x="3" y="4" width="16" height="24" fill="#4e4e4e" />
									<path d="M19 4h16v24H19l6-12Z" fill="#5c3430" />
								</svg>
							</ToolBtn>
							<ToolBtn $tone="sel">
								<svg width="32" height="40" viewBox="0 0 32 40" fill="none">
									<path d="M10 14C12 5 28 3 27 14c0 6-5 10-7 16" stroke="#d83a44" strokeWidth="6" />
									<circle cx="6" cy="22" r="3" fill="#eee" />
									<circle cx="15" cy="35" r="3" fill="#eee" />
								</svg>
							</ToolBtn>
							<ToolBtn $w={28} $tone="on">
								<Chev s={12} />
							</ToolBtn>
						</Group>
						<Group $ml={90}>
							{[0, 1, 2, 3].map((k) => (
								<ToolBtn key={k}>
									<ArrangeIcon kind={k} />
								</ToolBtn>
							))}
						</Group>
						<Group $ml={33}>
							<ToolBtn>
								<svg width="40" height="40" viewBox="0 0 40 40">
									<path d="M6 0v40" stroke="#4c4c4c" strokeWidth="1.5" />
									<rect x="10" y="7" width="24" height="12" rx="2" fill="#35495a" />
									<rect x="10" y="23" width="17" height="12" rx="2" fill="#35495a" />
								</svg>
							</ToolBtn>
						</Group>
						<Group $ml={32}>
							{[0, 1, 2, 3].map((k) => (
								<ToolBtn key={k}>
									<FlipIcon kind={k} />
								</ToolBtn>
							))}
						</Group>
						<Group $ml={32}>
							{[0, 1, 2].map((k) => (
								<ToolBtn key={k} $w={67} $tone="on">
									<GeoIcon kind={k} />
								</ToolBtn>
							))}
						</Group>
						<Group $ml={95}>
							<ToolBtn $w={67} $tone="on">
								<svg width="40" height="40" viewBox="0 0 40 40" fill="none" stroke="#8af0a8" strokeWidth="2.2">
									<ellipse cx="20" cy="12" rx="10" ry="11" />
									<path d="M2 38c0-12 8-16 14-16M38 38c0-12-8-16-14-16" />
								</svg>
							</ToolBtn>
						</Group>
					</Toolbar>

					<ContextBar>
						<BarLabel $w={67}>Knoten</BarLabel>
						<Sep $ml={15} />
						<LineField>
							<svg width="186" height="40" viewBox="0 0 186 40">
								<path d="M0 20h186" stroke="#9a9a9a" strokeWidth="1.6" />
								<path d="M76 38 106 2" stroke="#d8262c" strokeWidth="1.4" />
							</svg>
							<LineText>Ohne</LineText>
						</LineField>
						<Sep $ml={14} />
						<BarLabel $ml={31} $w={118}>Umwandeln:</BarLabel>
						<IconSlot $ml={15}>
							<CtxIcon name="sharp" />
						</IconSlot>
						<IconSlot>
							<CtxIcon name="smooth" />
						</IconSlot>
						<IconSlot>
							<CtxIcon name="auto" />
						</IconSlot>
						<Sep $ml={16} />
						<BarLabel $ml={31} $w={66}>Aktion:</BarLabel>
						<IconSlot $ml={14}>
							<CtxIcon name="break" />
						</IconSlot>
						<IconSlot>
							<CtxIcon name="join" />
						</IconSlot>
						<IconSlot $w={55}>
							<CtxIcon name="join" />
						</IconSlot>
						<IconSlot $w={55}>
							<CtxIcon name="curve" />
						</IconSlot>
						<IconSlot>
							<CtxIcon name="join" />
						</IconSlot>
						<IconSlot $w={55}>
							<CtxIcon name="undo" />
						</IconSlot>
						<Sep $ml={14} />
						<BarLabel $ml={32} $w={150}>Transformieren:</BarLabel>
						<SmallBtn $ml={16} $tone="on">
							<NodeFrame />
						</SmallBtn>
						<IconSlot $ml={2}>
							<CtxIcon name="target" />
						</IconSlot>
						<IconSlot>
							<CtxIcon name="eye" />
						</IconSlot>
						<IconSlot>
							<CtxIcon name="mirror" />
						</IconSlot>
						<IconSlot>
							<CtxIcon name="spiral" />
						</IconSlot>
						<BarLabel $ml={23} $w={108}>Ausrichten:</BarLabel>
						<SmallBtn $ml={15} $tone="on">
							<SnapIcon name="a" />
						</SmallBtn>
						<SmallBtn $ml={2} $tone="sel">
							<SnapIcon name="b" />
						</SmallBtn>
						<SmallBtn $ml={2} $tone="on">
							<SnapIcon name="c" />
						</SmallBtn>
						<SmallBtn $ml={9} $tone="on">
							<SnapIcon name="d" />
						</SmallBtn>
						<SmallBtn $ml={7} $tone="on">
							<SnapIcon name="e" />
						</SmallBtn>
						<Sep $ml={18} />
						<Check>
							<svg width="16" height="16" viewBox="0 0 16 16" fill="none" stroke="#eee" strokeWidth="1.6">
								<path d="M3 9l3.5 4L13 3" />
							</svg>
						</Check>
						<BarLabel $ml={11}>Ausrichtung anzeigen</BarLabel>
					</ContextBar>

					<Main>
						<ToolColumn>
							{tools.map((t) => (
								<Tool key={t.key} $sel={t.sel}>
									<svg width="36" height="36" viewBox="0 0 36 36">
										{toolIcons[t.key]}
									</svg>
									{t.corner && <Corner />}
								</Tool>
							))}
							<ColourWell>
								<svg width="64" height="106" viewBox="0 0 64 106">
									<circle cx="32" cy="32" r="30" fill="#2a2a2a" />
									<circle cx="32" cy="32" r="27.5" fill="#f2f2f2" />
									<circle cx="32" cy="32" r="15" fill="#3a3a3a" stroke="#1e1e1e" strokeWidth="1.5" />
									<path d="M40 16l8-7" stroke="#e8403c" strokeWidth="1.4" />
									<circle cx="32" cy="56" r="31" fill="#3a3a3a" />
									<circle cx="32" cy="56" r="28.5" fill={ORANGE} stroke="#151515" strokeWidth="1.6" />
									<path d="M18 93q14 10 28 0M14 91l4-4 2 6M50 91l-4-4-2 6" fill="none" stroke="#8a8a8a" strokeWidth="1.8" />
								</svg>
							</ColourWell>
						</ToolColumn>

						<CanvasColumn>
							<CanvasRow>
								<Canvas>
									<Page />
								</Canvas>
							</CanvasRow>
							<HScrollStrip />
						</CanvasColumn>

						<RightColumn>
							<Panel $h={476}>
								<Tabs items={[["Farbe", 80], ["Farbfelder", 123], ["Kontur", 88], ["Darstellung", 150]]} />
								<ColourBody>
									<SwatchRow>
										<svg width="170" height="90" viewBox="0 0 170 90">
											<circle cx="33" cy="27" r="26" fill="#2b2b2b" />
											<circle cx="33" cy="27" r="24" fill="#f4f4f4" />
											<circle cx="33" cy="27" r="14" fill="#3a3a3a" stroke="#1e1e1e" strokeWidth="1.5" />
											<path d="M16 44l6-5M43 15l5-4" stroke="#e8403c" strokeWidth="1.4" />
											<circle cx="54" cy="48" r="27" fill="#3e3e3e" />
											<circle cx="54" cy="48" r="25" fill={ORANGE} stroke="#111" strokeWidth="1.5" />
											<circle cx="15" cy="67" r="11" fill="#e8e8e8" />
											<path d="M8 74l14-14" stroke="#d9383c" strokeWidth="2" />
											<path d="M60 4q14 3 20 17M60 4l6-3M60 4l4 5M80 21l-6-3M80 21l3-6" fill="none" stroke="#9a9a9a" strokeWidth="1.6" />
											<path d="M101 32l15-16 4 4-15 15c-2 1-5-1-4-3Z" fill="#c4c4c4" />
											<path d="M114 14c3-1 5-6 9-8 6-3 12 2 9 9-2 4-6 5-8 8Z" fill="#b08068" />
											<circle cx="153" cy="17" r="14" fill="#2b2b2b" />
											<circle cx="153" cy="17" r="11.5" fill="#f0905a" stroke="#151515" strokeWidth="1.2" />
										</svg>
										<LockWrap>
											<Padlock />
										</LockWrap>
										<HslSelect $w={182} $ml={26}>
											HSL
											<UpDown />
										</HslSelect>
									</SwatchRow>
									<SliderStack>
										<SliderRow>
											<SliderLabel>H</SliderLabel>
											<Track $w={392} $bg="linear-gradient(90deg, #ee3324, #fdfc4f 17%, #6efc4a 33%, #6efcfc 50%, #0000f5 67%, #e92ef0 83%, #ee3324)">
												<Thumb $pos={7.4} $fill="radial-gradient(circle, #e8682c 30%, #9c5532 32%)" />
											</Track>
											<ValueBox>19</ValueBox>
										</SliderRow>
										<SliderRow>
											<SliderLabel>S</SliderLabel>
											<Track $w={392} $bg="linear-gradient(90deg, #8a8a8a, #f0723a)">
												<Thumb $pos={97.4} $fill="#e9703a" />
											</Track>
											<ValueBox>100</ValueBox>
										</SliderRow>
										<SliderRow>
											<SliderLabel>L</SliderLabel>
											<Track $w={392} $bg="linear-gradient(90deg, #000, #f0642c 57%, #fff)">
												<Thumb $pos={57.2} $fill="#e9703a" />
											</Track>
											<ValueBox>58</ValueBox>
										</SliderRow>
									</SliderStack>
									<Spectrum />
									<OpacityCaption>Deckkraft</OpacityCaption>
									<OpacityRow>
										<OrangeDot />
										<Track
											$w={322}
											$h={16}
											$bg="linear-gradient(90deg, transparent, #333), repeating-conic-gradient(#f2f2f2 0 25%, #8a8a8a 0 50%) 0 0 / 16px 12px"
										>
											<WhiteThumb $pos={96.5} $fill="#333" />
										</Track>
										<ValueBox $w={90} $ml={20}>
											100 %
										</ValueBox>
										<ChevBox>
											<Chev c="#a8a8a8" />
										</ChevBox>
									</OpacityRow>
								</ColourBody>
							</Panel>

							<Panel $grow>
								<Tabs items={[["Ebenen", 96], ["Pinsel", 81], ["QuickFX", 106], ["Stile", 90]]} />
								<LayerOptions>
									<BarLabel $w={106}>Deckkraft:</BarLabel>
									<DarkSegment $w={74}>100 %</DarkSegment>
									<ChevSegment $w={26}>
										<Chev c="#707070" s={12} />
									</ChevSegment>
									<Select $w={209} $ml={6} $h={40} $tone="#2e2e2e">
										<NormalLabel>Normal</NormalLabel>
										<UpDown c="#6a6a6a" />
									</Select>
									<IconSlot $w={30} $ml={13}>
										<svg width="26" height="26" viewBox="0 0 26 26">
											<Gear cx={13} cy={13} r={9} fill="#b0b0b0" />
											<circle cx="13" cy="13" r="4" fill="#363636" />
										</svg>
									</IconSlot>
									<IconSlot $w={18} $ml={15}>
										<Padlock c="#a8a8a8" />
									</IconSlot>
								</LayerOptions>
								<LayerList>
									{layers.map((l, i) => (
										<LayerRow key={i} layer={l} />
									))}
								</LayerList>
								<LayerTools>
									<StackBtn>
										<svg width="26" height="26" viewBox="0 0 26 26" fill="none" stroke="#c0c0c0" strokeWidth="1.5">
											<rect x="1" y="1" width="17" height="17" rx="1" />
											<path d="M21 6v13a2 2 0 0 1-2 2H6M25 10v13a2 2 0 0 1-2 2H10" />
										</svg>
									</StackBtn>
									<IconSlot $w={40} $ml={109}>
										<svg width="32" height="28" viewBox="0 0 32 28">
											<rect width="32" height="28" fill="#a6a6a6" />
											<circle cx="16" cy="14" r="8" fill="#363636" />
										</svg>
									</IconSlot>
									<IconSlot $w={40} $ml={6}>
										<svg width="32" height="32" viewBox="0 0 32 32" fill="none" stroke="#a6a6a6" strokeWidth="1.4">
											<circle cx="16" cy="16" r="15" />
											<path d="M26 11v5a10 10 0 0 1-18 6Z" fill="#a6a6a6" stroke="none" />
										</svg>
									</IconSlot>
									<IconSlot $w={40} $ml={2}>
										<svg width="28" height="32" viewBox="0 0 28 32">
											<path d="M2 1h24M2 31h24" stroke="#a6a6a6" strokeWidth="1.6" />
											<text x="14" y="25" textAnchor="middle" fontFamily="Inter, sans-serif" fontWeight="800" fontSize="23" fill="#a6a6a6">
												FX
											</text>
										</svg>
									</IconSlot>
									<IconSlot $w={40} $ml={3}>
										<svg width="30" height="32" viewBox="0 0 30 32" fill="none" stroke="#a6a6a6" strokeWidth="1.4">
											<path d="M9 1h14c2 6 2 12 6 29l-14 1-14-1C6 18 6 10 9 1ZM14 1c-1 10-1 20 1 30M18 1c2 10 3 20 4 30M6 10c8 2 14 2 19-1M3 21c8 2 18 2 24-1" />
										</svg>
									</IconSlot>
									<IconSlot $w={40} $ml={61}>
										<svg width="30" height="32" viewBox="0 0 30 32" fill="none" stroke="#a6a6a6" strokeWidth="1.4">
											<path d="M22 3H2v28h20v-5" />
											<path d="M7 12h13M7 17h13M7 22h13" strokeWidth="2.4" />
											<path d="M24 3v12M18 7h12" />
										</svg>
									</IconSlot>
									<IconSlot $w={40} $ml={4}>
										<svg width="24" height="32" viewBox="0 0 24 32">
											<rect x="1" y="1" width="22" height="30" fill="none" stroke="#a6a6a6" strokeWidth="1.4" />
											{[0, 1, 2, 3, 4].map((r) => (
												<rect key={r} x={r % 2 ? 12 : 7} y={5 + r * 4.6} width="5" height="4.6" fill="#a6a6a6" />
											))}
										</svg>
									</IconSlot>
									<IconSlot $w={40} $ml={6}>
										<svg width="26" height="32" viewBox="0 0 26 32" fill="none" stroke="#a6a6a6" strokeWidth="1.5">
											<path d="M1 6h24M8 6V2h10v4M3 6l1 25h18l1-25M10 11v15M16 11v15" />
										</svg>
									</IconSlot>
								</LayerTools>
							</Panel>

							<Panel $h={296}>
								<Tabs items={[["Transformieren", 170], ["Navigator", 117], ["Protokoll", 130]]} />
								<XformBody>
									<Anchor>
										<svg width="76" height="76" viewBox="0 0 76 76">
											<rect x="6" y="6" width="64" height="64" fill="#707070" />
											{[3, 38, 70].flatMap((y) =>
												[5, 38, 71].map((x) => <rect key={`${x}-${y}`} x={x - 5} y={y - 3} width="10" height="10" fill="#565656" />)
											)}
										</svg>
									</Anchor>
									<XformGrid>
										<XformLabel>X:</XformLabel>
										<XformField>0 px</XformField>
										<XformLabel $second>B:</XformLabel>
										<XformField>0 px</XformField>
										<XformLabel>Y:</XformLabel>
										<XformField>0 px</XformField>
										<XformLabel $second>H:</XformLabel>
										<XformField>0 px</XformField>
										<XformLabel>R:</XformLabel>
										<XformField>
											0 °
											<ChevTail>
												<Chev c="#707070" s={12} />
											</ChevTail>
										</XformField>
										<XformLabel $second>N:</XformLabel>
										<XformField>
											0 °
											<ChevTail>
												<Chev c="#707070" s={12} />
											</ChevTail>
										</XformField>
									</XformGrid>
									<ChainWrap>
										<svg width="14" height="42" viewBox="0 0 14 42" fill="none" stroke="#8a8a8a" strokeWidth="1.6">
											<path d="M2 15V3a2 2 0 0 1 2-2h6a2 2 0 0 1 2 2v12M2 27v12a2 2 0 0 0 2 2h6a2 2 0 0 0 2-2V27M0 20.500h14" />
										</svg>
									</ChainWrap>
									<FitRow>
										<FitBtn>
											<svg width="30" height="28" viewBox="0 0 30 28">
												<path d="M1 12V1h9M14 1h6M23 1h6v9M29 14v6M29 23v4h-6" fill="none" stroke="#dcdcdc" strokeWidth="1.6" />
												<rect x="1" y="13" width="16" height="15" rx="3" fill="#dcdcdc" />
											</svg>
										</FitBtn>
										<FitChev>
											<Chev c="#a0a0a0" s={12} />
										</FitChev>
									</FitRow>
								</XformBody>
							</Panel>
						</RightColumn>
					</Main>

					<BottomStrip>
						<PageNav>
							<svg width="42" height="18" viewBox="0 0 42 18">
								<path d="M2 0v18" stroke="#5a5a5a" strokeWidth="1.4" />
								<path d="M15 0v18L4 9ZM39 0v18L28 9Z" fill="#5e5e5e" />
							</svg>
						</PageNav>
						<PageNumber />
						<StatusText>
							<b>en</b> = Per Auswahlrahmen markieren. <b>Klick</b> auf Objekt = Objekt auswählen.
						</StatusText>
					</BottomStrip>
				</Window>

				<Redaction />
			</Desktop>
		</>
	);
}
